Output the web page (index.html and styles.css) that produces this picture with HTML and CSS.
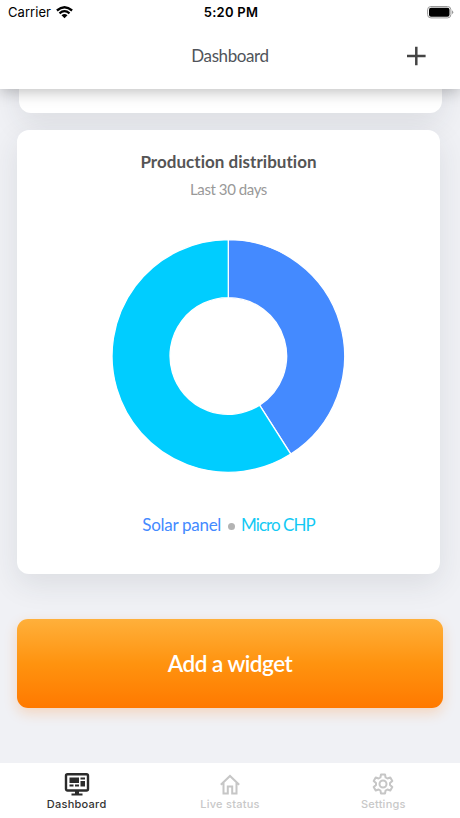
FILE: index.html
```html
<!DOCTYPE html>
<html lang="en">
<head>
<meta charset="utf-8">
<title>Dashboard</title>
<link rel="stylesheet" href="styles.css">
</head>
<body>
<div class="screen">
  <header class="header">
    <div class="status">
      <div class="carrier"><span>Carrier</span>
        <svg width="17" height="13" viewBox="0 0 17 13"><path d="M.9 4.500Q8.500-1.900 16.100 4.500M3.500 7.300Q8.500 3 13.500 7.300" fill="none" stroke="#000" stroke-width="2.300"/><path d="M5.500 9.300Q8.500 6.800 11.500 9.300L8.500 12.300Z"/></svg>
      </div>
      <div class="time">5:20 PM</div>
      <svg class="battery" width="27" height="13" viewBox="0 0 27 13"><rect x=".6" y=".5" width="23.300" height="11.400" rx="3.300" fill="none" stroke="#999"/><rect x="2" y="1.700" width="20.500" height="9" rx="2"/><path d="M25 4.200Q27.500 6.200 25 8.200Z" fill="#999"/></svg>
    </div>
    <div class="titlebar">
      <h1 class="title">Dashboard</h1>
      <svg class="plus" width="20" height="20" viewBox="0 0 20 20"><path d="M10.300 .8v18.400M1 10h18.600" stroke="#444" stroke-width="2.500"/></svg>
    </div>
  </header>
  <main class="content">
    <section class="card previous"></section>
    <section class="card distribution">
      <h2 class="card-title">Production distribution</h2>
      <p class="card-sub">Last 30 days</p>
      <svg class="donut" width="234" height="234" viewBox="-117.300 -117 234 234">
        <g stroke="#fff" stroke-width="1.300">
          <path fill="#448aff" d="M0-116.300A116.300 116.300 0 0 1 62.500 98.100L31.300 49.200A58.300 58.300 0 0 0 0-58.300Z"/>
          <path fill="#00cdff" d="M62.500 98.100A116.300 116.300 0 1 1 0-116.300V-58.300A58.300 58.300 0 1 0 31.300 49.200Z"/>
        </g>
      </svg>
      <div class="legend"><span class="solar">Solar panel</span><i class="dot"></i><span class="chp">Micro CHP</span></div>
    </section>
    <button class="add">Add a widget</button>
  </main>
  <nav class="tabs">
    <a class="tab active">
      <svg width="26" height="24" viewBox="0 0 26 24"><rect x="2" y="2.200" width="22" height="16.300" rx="1.500" fill="none" stroke="#2b2b2b" stroke-width="2.400"/><path fill="#2b2b2b" d="M5.500 5.500h9.500v5.500H5.500zM16.500 5.500H21v2h-4.500zM16.500 9H21v5.500h-4.500zM5.500 12.500h4v2h-4zM11 12.500h4v2h-4zM11 19h4v2.500h3.500v2h-11v-2H11z"/></svg>
      <span>Dashboard</span>
    </a>
    <a class="tab">
      <svg width="26" height="24" viewBox="0 0 26 24"><path d="M3.800 12.800 13 4l9.200 8.800M6.500 10.500v11h4.300v-7h4.400v7h4.300v-11" fill="none" stroke="#c6c6c6" stroke-width="2"/></svg>
      <span>Live status</span>
    </a>
    <a class="tab">
      <svg width="26" height="24" viewBox="0 0 26 24"><g fill="none" stroke="#c6c6c6" stroke-width="2"><path stroke-linejoin="round" d="M11 2.500h4l.6 3 1.800 1 2.900-1 2 3.500-2.300 2v2l2.300 2-2 3.500-2.900-1-1.800 1-.6 3h-4l-.6-3-1.800-1-2.900 1-2-3.500 2.300-2v-2l-2.300-2 2-3.500 2.900 1 1.800-1Z"/><circle cx="13" cy="12" r="3.500"/></g></svg>
      <span>Settings</span>
    </a>
  </nav>
</div>
</body>
</html>
```
FILE: styles.css
```css
* { box-sizing: border-box; }
body { margin: 0; font-family: Lato, sans-serif; font-variant-ligatures: none; }
h1, h2, p { margin: 0; font-weight: 400; }
svg { display: block; }
.screen { height: 818px; display: flex; flex-direction: column; background: #f0f1f5; overflow: hidden; }
.header { position: relative; z-index: 2; flex: none; height: 89px; background: #fff; box-shadow: 0 3px 14px rgba(0, 0, 0, .25); }
.status { height: 24px; padding: 0 6px 0 8px; display: grid; grid-template-columns: 1fr auto 1fr; align-items: center; font: 13px/24px Inter, sans-serif; color: #000; }
.carrier { display: flex; align-items: center; gap: 5px; letter-spacing: .05px; }
.time { font-weight: 600; letter-spacing: .25px; }
.battery { justify-self: end; }
.titlebar { height: 64px; padding-right: 34px; display: grid; grid-template-columns: 1fr auto 1fr; align-items: center; }
.title { grid-column: 2; margin-left: 34px; font-size: 17px; line-height: 24px; letter-spacing: -.4px; color: #50545a; }
.plus { justify-self: end; }
.content { flex: 1; min-height: 0; padding: 0 17px; display: flex; flex-direction: column; }
.card { flex: none; width: 423px; background: #fff; border-radius: 12px; box-shadow: 0 10px 30px rgba(40, 45, 60, .1); }
.previous { height: 44px; margin: -20px 0 17px 2px; }
.distribution { position: relative; height: 444px; padding-top: 20px; display: flex; flex-direction: column; align-items: center; }
.card-title { font-size: 17px; line-height: 24px; font-weight: 700; letter-spacing: .03px; color: #555; }
.card-sub { margin-top: 4px; font-size: 15px; line-height: 22px; letter-spacing: -.42px; color: #999; }
.donut { margin: 39px 1px 0 0; }
.legend { margin-top: 39px; display: flex; align-items: center; font-size: 17px; line-height: 25px; }
.solar { letter-spacing: -.28px; color: #448aff; }
.chp { letter-spacing: -.95px; color: #12c9f4; }
.dot { width: 7px; height: 7px; margin: 4px 6px 0 7px; border-radius: 50%; background: #b3b3b3; }
.add { position: relative; flex: none; width: 426px; height: 89px; margin-top: 45px; padding: 0; border: 0; border-radius: 11px; background: linear-gradient(#ffb03b, #ff930f 50%, #ff7900); box-shadow: 0 5px 13px rgba(255, 125, 20, .24); color: #fff; font: 600 22.5px Lato, sans-serif; letter-spacing: -.5px; }
.tabs { flex: none; height: 55px; display: grid; grid-template-columns: repeat(3, 1fr); background: #fff; }
.tab { display: flex; flex-direction: column; align-items: center; padding-top: 9px; color: #c8c8c8; font: 500 11px/16px Inter, sans-serif; letter-spacing: .25px; }
.active { color: #333; }
```
